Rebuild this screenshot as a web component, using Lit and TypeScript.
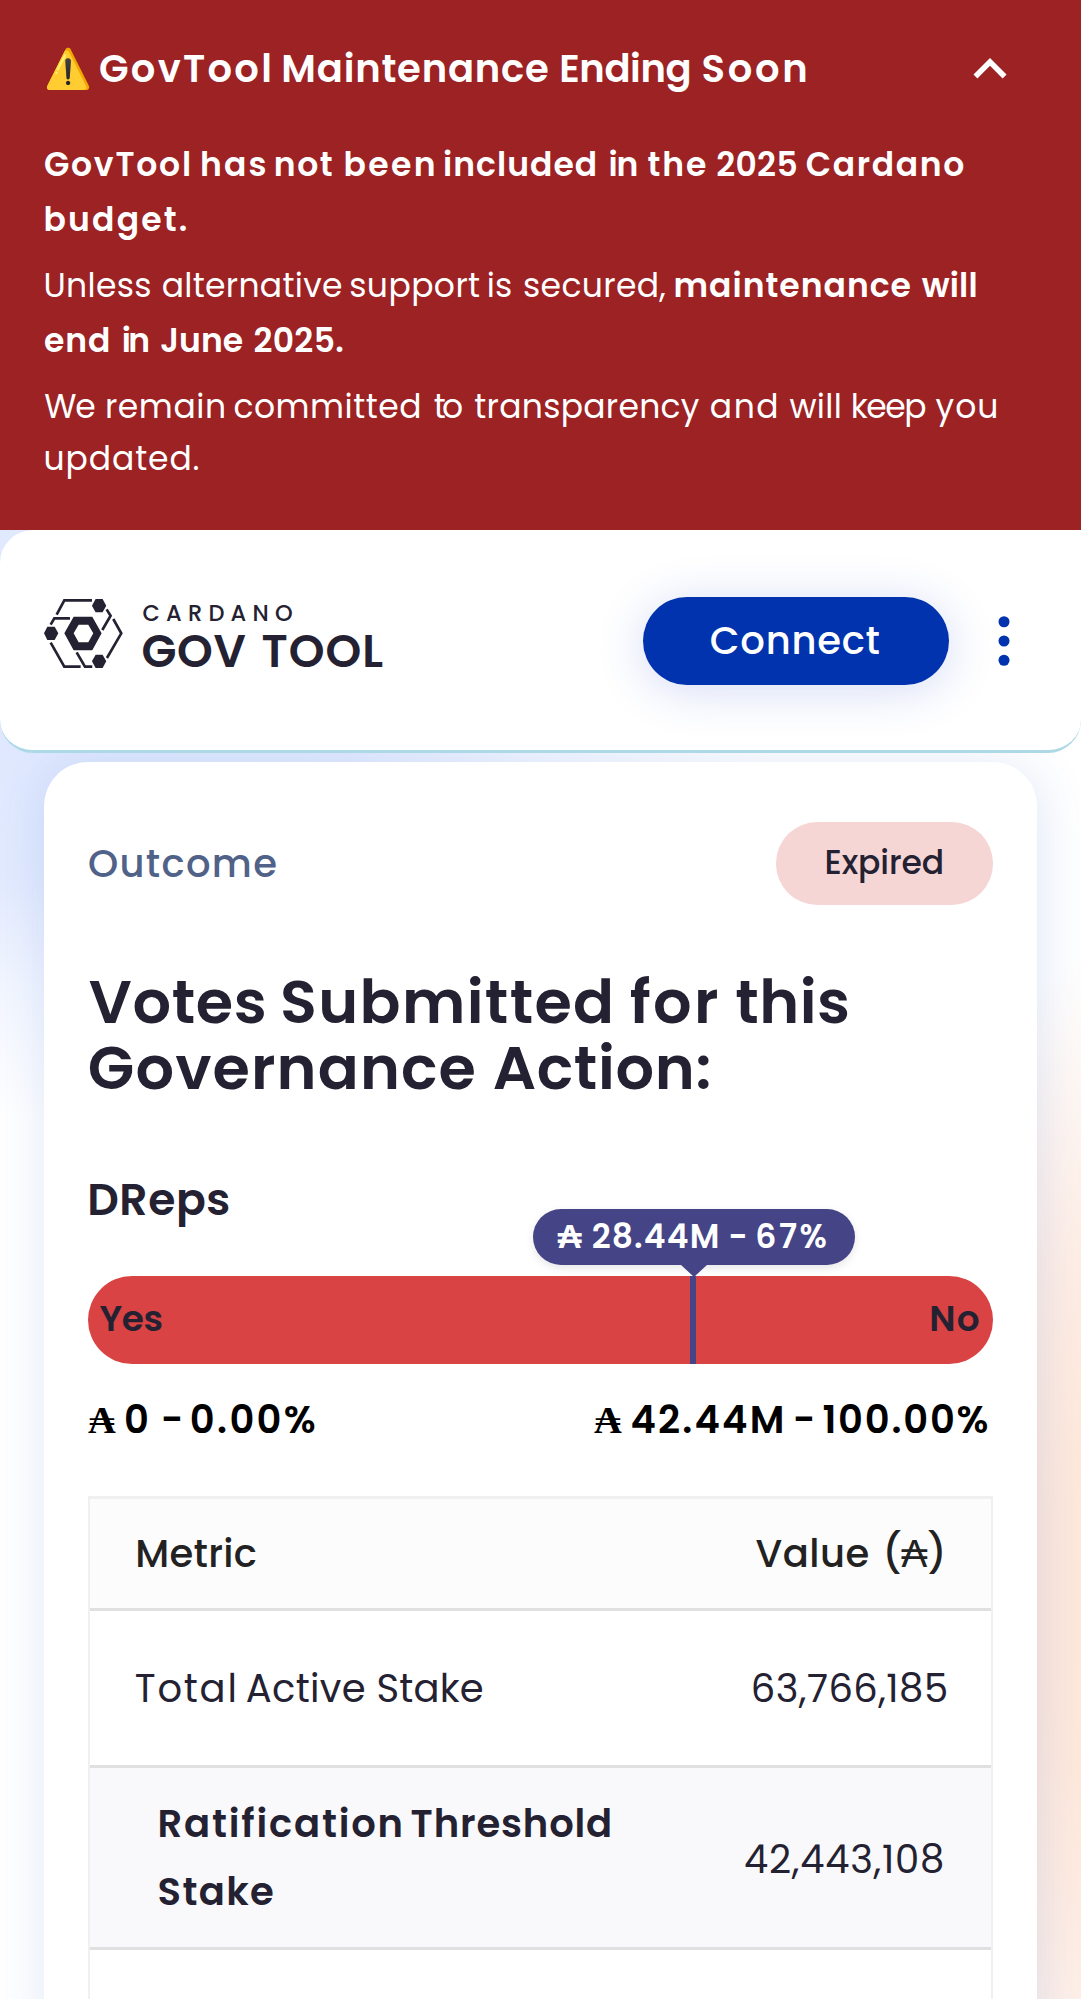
import { LitElement, html, css } from "lit";
import { customElement, property } from "lit/decorators.js";

/** A word with the left and right page edges of its ink. */
type Word = [text: string, left: number, right: number];

const pen = document.createElement("canvas").getContext("2d")!;

/**
 * One line of text whose words are tracked to fill given extents.
 * `start` or `end` is the edge of the containing box the line is aligned to.
 */
@customElement("fit-line")
class FitLine extends LitElement {
  @property({ attribute: false }) words: Word[] = [];
  @property({ type: Number }) start?: number;
  @property({ type: Number }) end?: number;
  static styles = css`
    :host { display: block; white-space: pre; }
  `;
  firstUpdated() {
    const spans = Array.from(this.renderRoot.querySelectorAll("span"));
    const measured = this.words.map(([text, left, right], i) => {
      const cs = getComputedStyle(spans[i]);
      pen.font = `${cs.fontWeight} ${cs.fontSize} ${cs.fontFamily}`;
      pen.fontKerning = "normal";
      const m = pen.measureText(text);
      const lsb = -m.actualBoundingBoxLeft;
      const rsb = m.width - m.actualBoundingBoxRight;
      const gaps = text.length - 1;
      const track = gaps ? (right - left - (m.width - lsb - rsb)) / gaps : 0;
      const x = left - lsb;
      return { track, x, tail: x + m.width + track * gaps, space: pen.measureText(" ").width };
    });
    measured.forEach((m, i) => {
      const next = measured[i + 1];
      spans[i].style.letterSpacing = `${m.track}px`;
      spans[i].style.marginRight = next ? `${next.x - m.tail - m.track - m.space}px` : `${-m.track}px`;
    });
    if (this.start !== undefined) this.style.marginLeft = `${measured[0].x - this.start}px`;
    if (this.end !== undefined) this.style.marginRight = `${this.end - measured[measured.length - 1].tail}px`;
  }
  render() {
    return this.words.map(([text], i) => html`${i ? " " : ""}<span>${text}</span>`);
  }
}

const line = (words: Word[], start: number) => html`<fit-line .words=${words} .start=${start}></fit-line>`;
const lineEnd = (words: Word[], end: number) => html`<fit-line .words=${words} .end=${end}></fit-line>`;

@customElement("maintenance-banner")
class MaintenanceBanner extends LitElement {
  static styles = css`
    :host { display: block; }
    .banner { box-sizing: border-box; height: 530.3px; padding: 36px 44px 0; background: #9c2224; color: #fff; }
    .head { display: flex; align-items: center; height: 66px; padding-right: 14px; }
    .warn { width: 54px; font-size: 38.5px; line-height: 66px; white-space: nowrap; }
    .title { flex: 1; margin: 0; font-size: 38.5px; font-weight: 600; line-height: 66px; }
    .chevron { width: 66px; height: 66px; }
    .body { display: flex; flex-direction: column; gap: 11px; padding-top: 35px; font-size: 33px; line-height: 55px; }
    .mixed { display: flex; }
    .strong { font-weight: 600; }
    .plain { line-height: 52.25px; padding-top: 2px; }
  `;
  render() {
    return html`<section class="banner">
      <div class="head">
        <span class="warn">⚠️</span>
        <h2 class="title">${line([["GovTool", 100, 270.2], ["Maintenance", 283.3, 548], ["Ending", 561.2, 689.4], ["Soon", 702.5, 805.2]], 98)}</h2>
        <svg class="chevron" viewBox="0 0 24 24" fill="#fff"><path d="m12 8-6 6 1.41 1.41L12 10.83l4.59 4.58L18 14z" /></svg>
      </div>
      <div class="body">
        <div class="strong">
          ${line([["GovTool", 44.9, 188.9], ["has", 202, 265.4], ["not", 275.8, 331.6], ["been", 345.4, 433.6], ["included", 444, 595.7], ["in", 609.4, 636.3], ["the", 647.4, 706], ["2025", 717, 796.3], ["Cardano", 806.6, 963.1]], 44)}
          ${line([["budget.", 45.5, 186.8]], 44)}
        </div>
        <div>
          <div class="mixed">
            ${line([["Unless", 45.5, 150.3], ["alternative", 162.7, 342], ["support", 350.2, 479.1], ["is", 488.8, 510.9], ["secured,", 524, 665.3]], 44)}
            <div class="strong">${line([["maintenance", 675.6, 910.7], ["will", 921.8, 975.5]], 666)}</div>
          </div>
          <div class="strong">${line([["end", 44.9, 109], ["in", 122.7, 148.2], ["June", 161.3, 242.7], ["2025.", 254.4, 343.3]], 44)}</div>
        </div>
        <div class="plain">
          ${line([["We", 44.3, 95.3], ["remain", 106.9, 224], ["committed", 234.4, 419.2], ["to", 433.6, 461.9], ["transparency", 474.3, 699.8], ["and", 710.8, 776.3], ["will", 789.4, 839.7], ["keep", 852.8, 925.2], ["you", 935.5, 996.2]], 44)}
          ${line([["updated.", 45.5, 198.6]], 44)}
        </div>
      </div>
    </section>`;
  }
}

@customElement("top-nav")
class TopNav extends LitElement {
  static styles = css`
    :host { display: block; position: relative; z-index: 1; }
    .nav { box-sizing: border-box; display: flex; align-items: center; height: 222.7px; padding: 1px 44px 0; background: #fff; border-bottom: 3px solid #add8e6; border-radius: 33px; }
    .logo { display: flex; align-items: flex-start; padding-bottom: 4.6px; color: #242232; }
    .mark { width: 78.6px; height: 69px; }
    .words { display: flex; flex-direction: column; width: 250px; padding: 2px 0 0 17.4px; }
    .small { font-size: 22.5px; line-height: 24px; font-weight: 500; }
    .large { font-size: 45.5px; line-height: 52px; font-weight: 600; }
    .connect { box-sizing: border-box; width: 305.6px; height: 88px; margin-left: auto; border: 0; padding: 0; border-radius: 44px; background: #0033ad; color: #fff; font: 500 38.5px/88px Poppins, Arial, sans-serif; text-align: left; box-shadow: 0 5.5px 48px rgba(47, 80, 210, 0.2); }
    .dots { width: 66px; height: 66px; margin-left: 22px; }
  `;
  render() {
    return html`<header class="nav">
      <div class="logo">
        <svg class="mark" viewBox="42 57 236 207" fill="none" stroke="#242232" stroke-width="8">
          <path d="M80 104 103 61h83M230 88l12 19-25 43M250 117l24 43-43 74M62 134l11-19h47M62 188l41 72h49M140 217l25 43h22" />
          <g fill="#242232" stroke="none">
            <path d="M197 57h21l11 20-11 20h-21l-11-20z" />
            <path d="M197 224h21l11 20-11 20h-21l-11-20z" />
            <path d="M52 140h22l11 20-11 20H52l-10-20z" />
            <path fill-rule="evenodd" d="M131 110h56l28 50-28 51h-56l-28-51zM146 134l-15 26 15 27h29l15-27-15-26z" />
          </g>
        </svg>
        <div class="words">
          <div class="small">${line([["CARDANO", 142.4, 292]], 140)}</div>
          <div class="large">${line([["GOV", 142.4, 245.5], ["TOOL", 262.4, 382.2]], 140)}</div>
        </div>
      </div>
      <button class="connect">${line([["Connect", 710.8, 879.5]], 643.4)}</button>
      <svg class="dots" viewBox="0 0 24 24" fill="#0033ad"><circle cx="12" cy="5" r="2" /><circle cx="12" cy="12" r="2" /><circle cx="12" cy="19" r="2" /></svg>
    </header>`;
  }
}

@customElement("vote-bar")
class VoteBar extends LitElement {
  @property({ type: Number }) threshold = 67;
  static styles = css`
    :host { display: block; }
    .bar { position: relative; box-sizing: border-box; display: flex; justify-content: space-between; height: 88px; border-radius: 44px; background: #d94343; color: #242232; font-size: 35.75px; line-height: 86px; font-weight: 600; }
    .line { position: absolute; top: 0; bottom: 0; width: 5.5px; margin-left: -4.2px; background: #454486; }
    .tip { position: absolute; bottom: 98.5px; box-sizing: border-box; width: 322px; height: 55.7px; margin-left: -161.8px; border-radius: 28px; background: #454486; color: #fff; font-size: 33px; line-height: 55.5px; box-shadow: 0 3px 8px rgba(0, 0, 0, 0.1); }
    .tip::after { content: ""; position: absolute; left: 147.7px; top: 55px; border: 14px solid transparent; border-top: 13px solid #454486; border-bottom: 0; }
    .totals { display: flex; justify-content: space-between; margin-top: 27.5px; color: #000; font-family: Poppins; font-size: 38.5px; line-height: 58px; font-weight: 600; }
  `;
  render() {
    const { threshold } = this;
    return html`<div class="bar">
        ${line([["Yes", 99.4, 161.5]], 88)}${lineEnd([["No", 931.2, 978.7]], 993)}
        <div class="line" style="left:${threshold}%"></div>
        <div class="tip" style="left:${threshold}%">${line([["₳", 557.9, 583], ["28.44M", 592.7, 717.7], ["-", 730.5, 745], [`${threshold}%`, 757.3, 826.5]], 532.6)}</div>
      </div>
      <div class="totals">
        ${line([["₳", 88, 115.2], ["0", 126, 147.4], ["-", 162.9, 179.4], ["0.00%", 191.8, 314.7]], 88)}
        ${lineEnd([["₳", 594, 620.9], ["42.44M", 631.6, 781.7], ["-", 795.1, 811], ["100.00%", 823.4, 987.6]], 993)}
      </div>`;
  }
}

@customElement("app-root")
class AppRoot extends LitElement {
  static styles = css`
    :host { display: block; height: 1999px; overflow: hidden; font-family: Poppins, Arial, sans-serif; color: #242232;
      background:
        radial-gradient(ellipse 760px 440px at 20px 680px, #dee7fe 0%, #e2eafe 45%, rgba(238, 243, 255, 0.75) 70%, rgba(255, 255, 255, 0) 100%),
        radial-gradient(ellipse 420px 680px at 1200px 1610px, #ffe6d8 0%, #ffe9dc 38%, rgba(255, 236, 226, 0.85) 62%, rgba(255, 255, 255, 0) 100%),
        #fff; }
    .card { box-sizing: border-box; width: 993px; height: 1300px; margin: 8.7px 44px 0; padding: 60.3px 44px 0; border-radius: 44px; background: #fff; box-shadow: 2.75px 5.5px 50px rgba(47, 98, 200, 0.16); }
    .top { display: flex; align-items: center; justify-content: space-between; }
    .outcome { font-size: 38.5px; font-weight: 500; color: #506288; }
    .pill { box-sizing: border-box; width: 217.2px; border-radius: 41.3px; background: #f6d5d5; font-size: 33px; line-height: 82.7px; font-weight: 500; }
    h1 { margin: 64px 0 0; font-size: 60.5px; line-height: 66px; font-weight: 600; }
    h2 { margin: 66px 0 43px; font-size: 44px; line-height: 66px; font-weight: 600; }
    .table { margin-top: 46.8px; border: 2.75px solid #f0f0f1; border-top-width: 3px; border-bottom: 0; font-size: 38.5px; line-height: 68.7px; }
    .row { box-sizing: border-box; display: flex; align-items: center; justify-content: space-between; padding-top: 2px; border-bottom: 3px solid #e0e0e0; }
    .header { height: 112px; background: #fcfcfc; color: #222; font-weight: 500; }
    .plain { height: 157px; }
    .shaded { height: 181.9px; background: #f9f9fb; }
    .rest { height: 157px; }
    .threshold { font-weight: 600; }
    .threshold-value { padding-top: 4px; }
  `;
  render() {
    return html`
      <maintenance-banner></maintenance-banner>
      <top-nav></top-nav>
      <main class="card">
        <div class="top">
          <div class="outcome">${line([["Outcome", 88.9, 276.2]], 88)}</div>
          <div class="pill">${line([["Expired", 826.6, 941.7]], 775.8)}</div>
        </div>
        <h1>
          ${line([["Votes", 88.8, 264.7], ["Submitted", 283, 610.1], ["for", 630.8, 717], ["this", 736.3, 848]], 88)}
          ${line([["Governance", 89.8, 474.6], ["Action:", 493.6, 709.4]], 88)}
        </h1>
        <h2>${line([["DReps", 90.2, 228.3]], 88)}</h2>
        <vote-bar></vote-bar>
        <div class="table">
          <div class="row header">${line([["Metric", 137.2, 255.8]], 90)}${lineEnd([["Value", 755.6, 868.4], ["(₳)", 886.4, 942.4]], 991)}</div>
          <div class="row plain">${line([["Total", 135.8, 234.4], ["Active", 246.8, 364.7], ["Stake", 378.5, 482.6]], 90)}${lineEnd([["63,766,185", 752.8, 945.9]], 991)}</div>
          <div class="row shaded">
            <div class="threshold">${line([["Ratification", 159.6, 400.6], ["Threshold", 411.6, 610.1]], 90)}${line([["Stake", 158.6, 273]], 90)}</div>
            <div class="threshold-value">${lineEnd([["42,443,108", 745, 943]], 991)}</div>
          </div>
          <div class="row rest"></div>
        </div>
      </main>`;
  }
}
